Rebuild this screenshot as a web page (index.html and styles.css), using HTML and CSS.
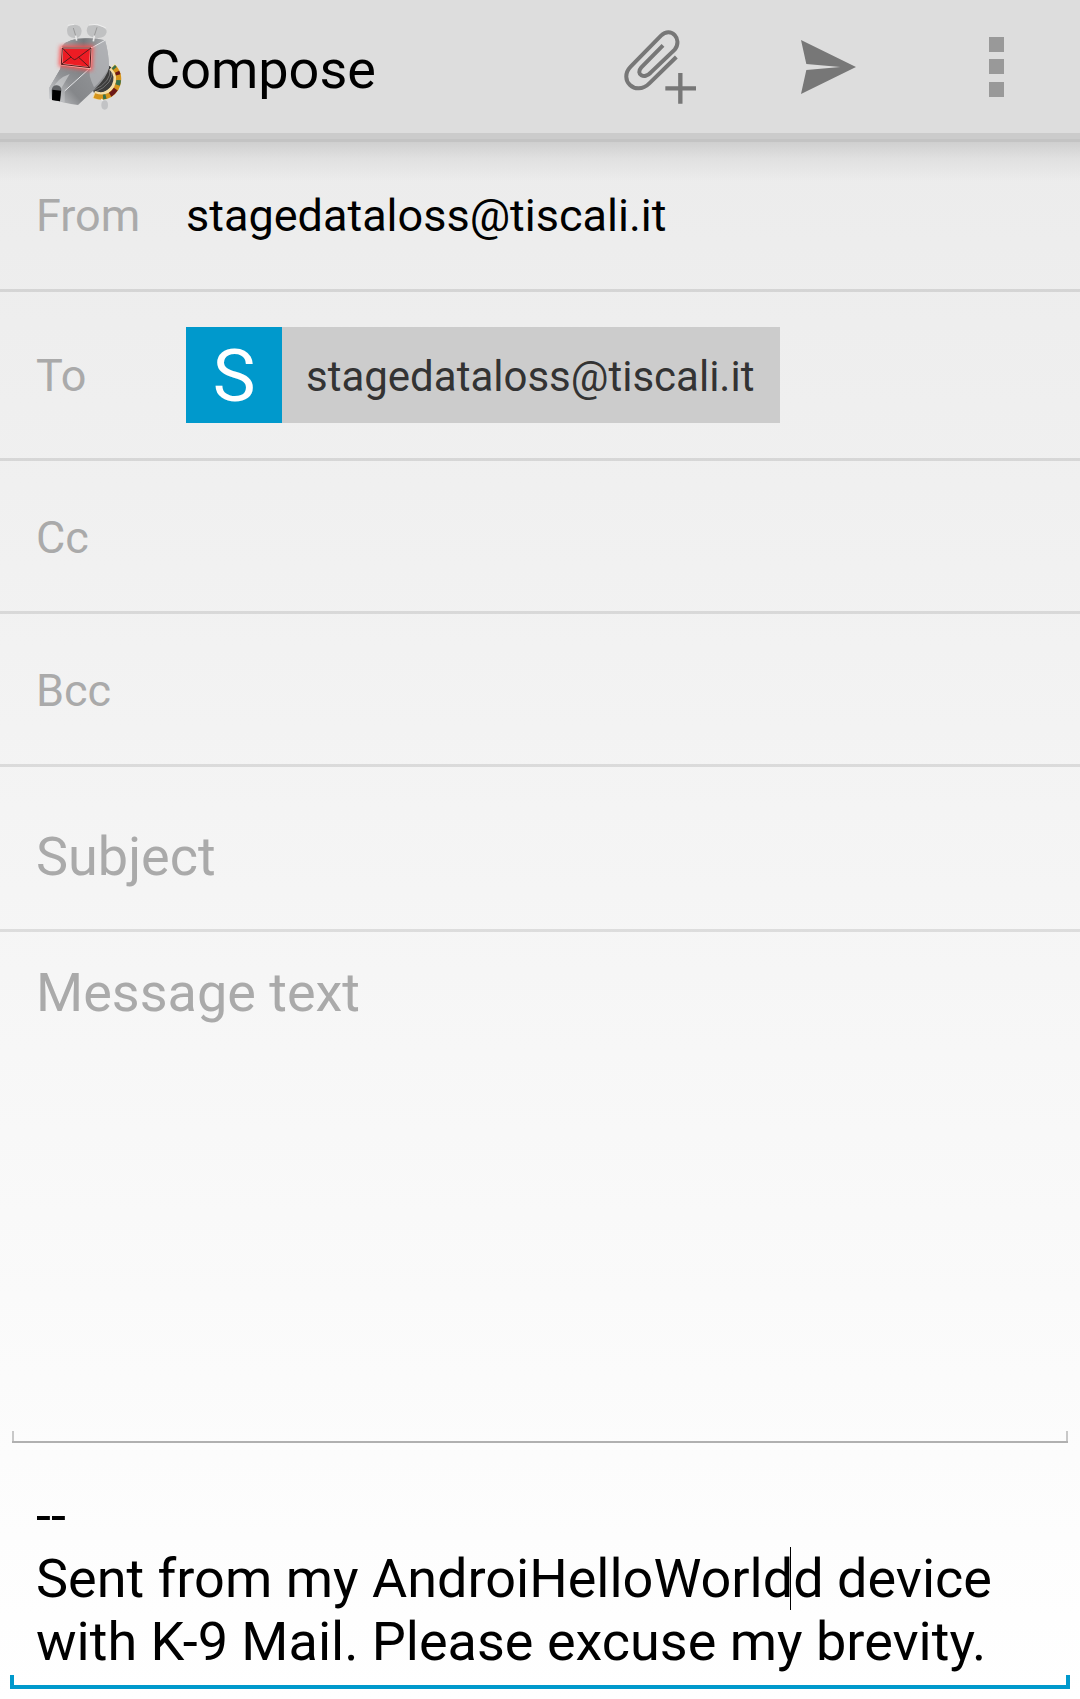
FILE: index.html
```html
<!DOCTYPE html>
<html lang="en">
<head>
<meta charset="utf-8">
<meta name="viewport" content="width=device-width, initial-scale=1">
<title>Compose</title>
<link rel="stylesheet" href="styles.css">
</head>
<body>
<header class="bar">
  <svg class="logo" viewBox="0 0 270 300" aria-hidden="true">
    <defs>
      <linearGradient id="side" x1="0" y1="1" x2="1" y2="0">
        <stop offset="0" stop-color="#d2d3d5"/><stop offset=".3" stop-color="#85878a"/><stop offset=".6" stop-color="#8f9194"/><stop offset="1" stop-color="#b4b6b9"/>
      </linearGradient>
      <linearGradient id="snout" x1="0" y1="1" x2="1" y2="0">
        <stop offset="0" stop-color="#d6d7d9"/><stop offset=".5" stop-color="#909295"/><stop offset="1" stop-color="#77797c"/>
      </linearGradient>
      <linearGradient id="brow" x1="0" y1="0" x2="1" y2="0">
        <stop offset="0" stop-color="#a4a6a8"/><stop offset=".5" stop-color="#77797c"/><stop offset="1" stop-color="#a9abae"/>
      </linearGradient>
      <filter id="glow" x="-30%" y="-30%" width="160%" height="160%"><feGaussianBlur stdDeviation="6"/></filter>
    </defs>
    <path d="M206 150L222 160Q234 186 222 208Q200 240 166 236L158 216Z" fill="#3c3c3c"/>
    <path d="M212 162Q219 200 164 226M217 160Q229 206 165 233" fill="none" stroke="#8c8c8c" stroke-width="2"/>
    <path d="M219 155Q246 180 228 217Q205 254 164 239" fill="none" stroke="#f5dda4" stroke-width="23"/>
    <path d="M223 155Q250 182 232 220Q208 257 166 242" fill="none" stroke="#d5941b" stroke-width="15"/>
    <path d="M223 155Q250 182 232 220Q208 257 166 242" fill="none" stroke="#38704c" stroke-width="14" stroke-dasharray="7 38 15 51 9 100"/>
    <path d="M223 155Q250 182 232 220Q208 257 166 242" fill="none" stroke="#6c1818" stroke-width="14" stroke-dasharray="0 19 10 44 24 100"/>
    <path d="M187 252L196 263" stroke="#eee" stroke-width="4"/>
    <ellipse cx="197" cy="270" rx="10" ry="14" fill="#c2c3c5"/>
    <path d="M70 93Q88 70 140 70Q172 69 198 76Q209 110 210 158Q206 184 165 225L117 270Q75 266 30 250V220L64 162Z" fill="url(#side)"/>
    <path d="M70 93Q88 70 140 70Q172 69 198 76L157 99Z" fill="url(#brow)"/>
    <path d="M157 99L198 76Q209 110 210 158Q188 196 165 217Q145 175 154 158Z" fill="#b0b2b5" opacity=".8"/>
    <path d="M154 158L78 227L77 262L30 250V220L64 162L68 148Z" fill="url(#snout)"/>
    <path d="M92 177Q55 190 42 220L66 221Z" fill="#d0d1d3" opacity=".65"/>
    <path d="M157 99L198 76M154 158L77 228" fill="none" stroke="#e4e5e7" stroke-width="3"/>
    <path d="M38 225Q40 210 54 211Q67 213 67 226L63 259L39 255Z" fill="#626467"/>
    <path d="M40 224L66 227L63 259L39 255Z" fill="#000"/>
    <path d="M70 99L156 99L153 159L67 148Z" fill="#ff4848" stroke="#ff5050" stroke-width="14" filter="url(#glow)"/>
    <path d="M70 99L156 99L153 159L67 148Z" fill="#ed1c24" stroke="#ffb0aa" stroke-width="6"/>
    <path d="M70 99L156 99L153 158L67 148ZM70 99L101 131Q107 137 113 131L156 99M67 148L96 126M119 127L153 158" fill="none" stroke="#571b1d" stroke-width="3"/>
    <path d="M84 46Q84 28 104 29Q126 28 128 47Q127 70 107 69Q84 69 84 46Z" fill="#c0c1c2"/>
    <path d="M143 47Q144 26 166 30Q204 34 203 52Q198 71 174 69Q145 66 143 47Z" fill="#c0c1c2"/>
    <path d="M86 31L106 28M150 30L174 28L200 38" fill="none" stroke="#eee" stroke-width="3"/>
    <path d="M103 39L110 62M174 37L166 62" stroke="#999" stroke-width="3"/>
    <path d="M110 62L113 77M166 62L163 79" stroke="#e9e9e9" stroke-width="5"/>
  </svg>
  <h1 class="title">Compose</h1>
  <button class="action" type="button" aria-label="Add attachment">
    <svg class="clip" viewBox="0 0 216 222" aria-hidden="true">
      <g fill="none" stroke="#777" stroke-width="12">
        <path d="M117 46L52 112C33 133 62 149 80 128L152 59C177 28 141-12 111 17L20 110C-18 149 34 201 76 160L157 81"/>
        <path d="M169 129V221M124 175H216" stroke-width="13"/>
      </g>
    </svg>
  </button>
  <button class="action" type="button" aria-label="Send">
    <svg class="send" viewBox="0 0 165 162" aria-hidden="true"><path d="M0 0L165 81L0 162L16 90L118 81L16 72Z" fill="#777"/></svg>
  </button>
  <button class="action" type="button" aria-label="More options">
    <svg class="more" viewBox="0 0 15 60" aria-hidden="true"><path d="M0 0H15V15H0ZM0 22H15V37H0ZM0 45H15V60H0Z" fill="#999"/></svg>
  </button>
</header>
<form class="form">
  <div class="row">
    <label class="label" for="from">From</label>
    <select class="field" id="from"><option>stagedataloss@tiscali.it</option></select>
  </div>
  <div class="row row-to">
    <label class="label" for="to">To</label>
    <span class="chip"><span class="avatar">S</span><span class="address">stagedataloss@tiscali.it</span></span>
    <input class="field" id="to" type="text">
  </div>
  <div class="row row-copy">
    <label class="label" for="cc">Cc</label>
    <input class="field" id="cc" type="text">
  </div>
  <div class="row row-copy">
    <label class="label" for="bcc">Bcc</label>
    <input class="field" id="bcc" type="text">
  </div>
  <div class="row row-subject">
    <input class="field large" type="text" placeholder="Subject" aria-label="Subject">
  </div>
  <div class="editor editor-message">
    <textarea class="text large" placeholder="Message text" aria-label="Message text"></textarea>
    <div class="underline"></div>
  </div>
  <div class="editor editor-signature">
    <textarea class="text large" rows="3" aria-label="Signature">--
Sent from my AndroiHelloWorldd device with K-9 Mail. Please excuse my brevity.</textarea>
    <span class="caret"></span>
    <div class="underline active"></div>
  </div>
</form>
</body>
</html>
```
FILE: styles.css
```css
* {
  box-sizing: border-box;
}

body {
  margin: 0;
  min-height: 100vh;
  display: flex;
  flex-direction: column;
  background: linear-gradient(#eaeaea, #fff);
  color: #000;
  font-family: Roboto, sans-serif;
  font-size: 45px;
}

.bar {
  display: flex;
  align-items: center;
  height: 142px;
  padding: 0 0 9px 39px;
  background: linear-gradient(#ddd 133px, #cbcbcb 133px, #cbcbcb 139px, #c3c3c3 139px);
}

.logo {
  width: 90px;
  height: 100px;
  margin-bottom: 4px;
}

.title {
  flex: 1;
  margin: 0;
  padding: 5px 0 0 16px;
  font-size: 54px;
  font-weight: 400;
}

.action {
  display: flex;
  align-items: center;
  justify-content: center;
  width: 168px;
  height: 133px;
  padding: 0;
  border: 0;
  background: none;
}

.clip {
  width: 72px;
  height: 74px;
  overflow: visible;
}

.send {
  width: 55px;
  height: 54px;
}

.more {
  width: 15px;
  height: 60px;
}

.form {
  flex: 1;
  display: flex;
  flex-direction: column;
  padding-bottom: 10px;
  background: linear-gradient(rgba(0, 0, 0, 0.12), rgba(0, 0, 0, 0.05) 16px, transparent 40px);
}

.row {
  display: flex;
  align-items: center;
  height: 150px;
  padding: 0 36px;
  border-bottom: 3px solid rgba(0, 0, 0, 0.1);
}

.row-to {
  height: 169px;
}

.row-copy {
  height: 153px;
  padding-top: 3px;
}

.row-subject {
  height: 165px;
  padding-top: 16px;
}

.label {
  width: 150px;
  color: #aaa;
}

.field,
.text {
  flex: 1;
  min-width: 0;
  padding: 0;
  border: 0;
  outline: 0;
  background: none;
  color: #000;
  font: inherit;
  appearance: none;
}

.large {
  font-size: 54px;
  line-height: 63px;
}

::placeholder {
  color: #aaa;
  opacity: 1;
}

.chip {
  display: flex;
  align-items: center;
  height: 96px;
  background: #ccc;
  color: #333;
  font-size: 42px;
}

.avatar {
  width: 96px;
  height: 96px;
  padding-top: 2px;
  background: #0099cc;
  color: #fff;
  font-size: 72px;
  line-height: 96px;
  text-align: center;
}

.address {
  padding: 2px 26px 0 24px;
}

.editor {
  position: relative;
  display: flex;
  flex-direction: column;
}

.editor-message {
  flex: 1;
  padding-top: 29px;
}

.editor-signature {
  padding-top: 41px;
}

.text {
  display: block;
  padding: 0 36px;
  resize: none;
  overflow: hidden;
}

.editor-signature .text {
  flex: none;
}

/* The bracket below a text area, with a short upright at each end. */
.underline {
  height: 12px;
  margin: 0 12px;
  border-bottom: 2px solid #b0b0b0;
  background:
    linear-gradient(#c8c8c8, #c8c8c8) left / 2px 100% no-repeat,
    linear-gradient(#c8c8c8, #c8c8c8) right / 2px 100% no-repeat;
}

.underline.active {
  height: 14px;
  margin: 2px 10px 0;
  border-bottom: 4px solid #0099cc;
  background:
    linear-gradient(#0099cc, #0099cc) left / 4px 100% no-repeat,
    linear-gradient(#0099cc, #0099cc) right / 4px 100% no-repeat;
}

.caret {
  position: absolute;
  top: 104px;
  left: 790px;
  width: 1px;
  height: 63px;
  background: #000;
}
```
